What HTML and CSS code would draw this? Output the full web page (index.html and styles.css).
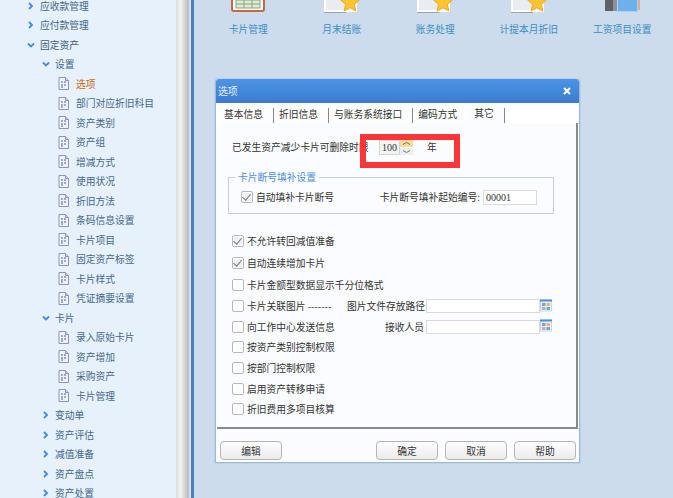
FILE: index.html
```html
<!DOCTYPE html>
<html lang="zh">
<head>
<meta charset="utf-8">
<title>选项</title>
<link rel="stylesheet" href="styles.css">
</head>
<body>
<div class="app">
  <nav class="side">
    <ul class="tree">
      <li class="row l1"><svg class="ar" viewBox="0 0 8 8"><path d="M2 1l3 3-3 3" /></svg>应收款管理</li>
      <li class="row l1"><svg class="ar" viewBox="0 0 8 8"><path d="M2 1l3 3-3 3" /></svg>应付款管理</li>
      <li class="row l1"><svg class="ar" viewBox="0 0 8 8"><path d="M1 2.5l3 3 3-3" /></svg><span class="dk">固定资产</span></li>
      <li class="row l2"><svg class="ar" viewBox="0 0 8 8"><path d="M1 2.5l3 3 3-3" /></svg>设置</li>
      <li class="row l3 cur-item"><svg class="doc" viewBox="0 0 11 13"><use href="#d"/></svg>选项</li>
      <li class="row l3"><svg class="doc" viewBox="0 0 11 13"><use href="#d"/></svg>部门对应折旧科目</li>
      <li class="row l3"><svg class="doc" viewBox="0 0 11 13"><use href="#d"/></svg>资产类别</li>
      <li class="row l3"><svg class="doc" viewBox="0 0 11 13"><use href="#d"/></svg>资产组</li>
      <li class="row l3"><svg class="doc" viewBox="0 0 11 13"><use href="#d"/></svg>增减方式</li>
      <li class="row l3"><svg class="doc" viewBox="0 0 11 13"><use href="#d"/></svg>使用状况</li>
      <li class="row l3"><svg class="doc" viewBox="0 0 11 13"><use href="#d"/></svg>折旧方法</li>
      <li class="row l3"><svg class="doc" viewBox="0 0 11 13"><use href="#d"/></svg>条码信息设置</li>
      <li class="row l3"><svg class="doc" viewBox="0 0 11 13"><use href="#d"/></svg>卡片项目</li>
      <li class="row l3"><svg class="doc" viewBox="0 0 11 13"><use href="#d"/></svg>固定资产标签</li>
      <li class="row l3"><svg class="doc" viewBox="0 0 11 13"><use href="#d"/></svg>卡片样式</li>
      <li class="row l3"><svg class="doc" viewBox="0 0 11 13"><use href="#d"/></svg>凭证摘要设置</li>
      <li class="row l2"><svg class="ar" viewBox="0 0 8 8"><path d="M1 2.5l3 3 3-3" /></svg>卡片</li>
      <li class="row l3"><svg class="doc" viewBox="0 0 11 13"><use href="#d"/></svg>录入原始卡片</li>
      <li class="row l3"><svg class="doc" viewBox="0 0 11 13"><use href="#d"/></svg>资产增加</li>
      <li class="row l3"><svg class="doc" viewBox="0 0 11 13"><use href="#d"/></svg>采购资产</li>
      <li class="row l3"><svg class="doc" viewBox="0 0 11 13"><use href="#d"/></svg>卡片管理</li>
      <li class="row l2"><svg class="ar" viewBox="0 0 8 8"><path d="M2 1l3 3-3 3" /></svg>变动单</li>
      <li class="row l2"><svg class="ar" viewBox="0 0 8 8"><path d="M2 1l3 3-3 3" /></svg>资产评估</li>
      <li class="row l2"><svg class="ar" viewBox="0 0 8 8"><path d="M2 1l3 3-3 3" /></svg>减值准备</li>
      <li class="row l2"><svg class="ar" viewBox="0 0 8 8"><path d="M2 1l3 3-3 3" /></svg>资产盘点</li>
      <li class="row l2"><svg class="ar" viewBox="0 0 8 8"><path d="M2 1l3 3-3 3" /></svg>资产处置</li>
    </ul>
  </nav>
  <div class="split"></div>
  <main class="main">
    <div class="tools">
      <div class="tool">
        <svg class="ti" viewBox="0 0 36 14"><rect x="2" y="-6" width="32" height="17" rx="2" fill="#fff" stroke="#c9683f" stroke-width="2"/><path d="M6 0h24v8H6z" fill="#dfe9d4" stroke="#8aa67c"/><path d="M6 4h24M14 0v8M22 0v8" stroke="#8aa67c"/></svg>
        <span>卡片管理</span>
      </div>
      <div class="tool">
        <svg class="ti" viewBox="0 0 36 14"><use href="#cal"/></svg>
        <span>月末结账</span>
      </div>
      <div class="tool">
        <svg class="ti" viewBox="0 0 36 14"><use href="#cal"/></svg>
        <span>账务处理</span>
      </div>
      <div class="tool">
        <svg class="ti" viewBox="0 0 36 14"><use href="#cal"/></svg>
        <span>计提本月折旧</span>
      </div>
      <div class="tool">
        <svg class="ti" viewBox="0 0 36 14"><rect x="1" y="-4" width="12" height="15" fill="#5e6268"/><rect x="9" y="-4" width="6" height="15" fill="#8f9297"/><rect x="33" y="-4" width="3" height="14" fill="#dcae92"/><rect x="13.5" y="-4" width="20" height="15.500" fill="#6fb0ea" stroke="#a9d2f5"/></svg>
        <span>工资项目设置</span>
      </div>
    </div>
    <section class="dlg">
      <header class="dh"><span>选项</span><svg class="x" viewBox="0 0 8 8"><path d="M1 1l6 6M7 1l-6 6"/></svg></header>
      <div class="tabs">
        <span class="tab">基本信息</span><span class="tab">折旧信息</span><span class="tab">与账务系统接口</span><span class="tab nosep">编码方式</span><span class="tab cur">其它</span>
      </div>
      <div class="panel">
        <div class="limit">
          <span class="ll">已发生资产减少卡片可删除时限</span>
          <span class="num">100</span>
          <span class="spin">
            <svg class="sb up" viewBox="0 0 13 7"><path d="M3 4.500l3.500-2 3.500 2"/></svg>
            <svg class="sb dn" viewBox="0 0 13 7"><path d="M3 2.500l3.500 2 3.500-2"/></svg>
          </span>
          <span class="yr">年</span>
          <div class="mark"></div>
        </div>
        <fieldset class="fs">
          <legend>卡片断号填补设置</legend>
          <div class="fr">
            <label class="ck chk">自动填补卡片断号</label>
            <span class="fstart">卡片断号填补起始编号:<span class="inp s">00001</span></span>
          </div>
        </fieldset>
        <div class="opts">
          <label class="ck chk tall">不允许转回减值准备</label>
          <label class="ck chk tall">自动连续增加卡片</label>
          <label class="ck tall">卡片金额型数据显示千分位格式</label>
          <div class="line">
            <label class="ck w1">卡片关联图片 -------</label>
            <span class="fl w2">图片文件存放路径</span>
            <span class="inp b"></span>
            <svg class="cal" viewBox="0 0 12 12"><use href="#grid"/></svg>
          </div>
          <div class="line">
            <label class="ck w1">向工作中心发送信息</label>
            <span class="fl w2">接收人员</span>
            <span class="inp b"></span>
            <svg class="cal" viewBox="0 0 12 12"><use href="#grid"/></svg>
          </div>
          <label class="ck">按资产类别控制权限</label>
          <label class="ck">按部门控制权限</label>
          <label class="ck">启用资产转移申请</label>
          <label class="ck">折旧费用多项目核算</label>
        </div>
      </div>
      <footer class="df">
        <button class="btn">编辑</button>
        <span class="sp"></span>
        <button class="btn">确定</button>
        <button class="btn">取消</button>
        <button class="btn">帮助</button>
      </footer>
    </section>
  </main>
</div>
<svg class="defs" width="0" height="0">
  <defs>
    <g id="d"><path d="M1 .5h6.500l3 3v9H1z" fill="#eef1fa" stroke="#8c93c4"/><path d="M7.500.5v3h3" fill="#c9cfe8" stroke="#8c93c4"/><path d="M3 5h2M6 5h2M3 8h2M6 8h2M3 10h2" stroke="#55618c"/></g>
    <g id="cal"><path d="M1 -4h31v15H1z" fill="#e9edf2" stroke="#fff" stroke-width="2"/><path d="M0 12.500h22" stroke="#9aa2ab"/><path d="M26-7l2.700 6.300 6.800.6-5.100 4.500 1.500 6.700-5.900-3.500-5.900 3.500 1.500-6.700-5.100-4.500 6.800-.6z" fill="#fbc434" stroke="#efa91f" stroke-width="1" stroke-linejoin="round"/></g>
    <g id="grid"><rect x=".5" y=".5" width="11" height="11" fill="#eaf1fa" stroke="#c6d6ea"/><rect x="0" y="0" width="12" height="2" fill="#4f8fd8"/><rect x="2" y="3.500" width="3.500" height="3" fill="#6aa8e0"/><rect x="6.500" y="3.500" width="3.500" height="3" fill="#f2b06a"/><rect x="2" y="7.500" width="3.500" height="3" fill="#e79ab8"/><rect x="6.500" y="7.500" width="3.500" height="3" fill="#5fb8a8"/></g>
  </defs>
</svg>
</body>
</html>
```
FILE: styles.css
```css
*{box-sizing:border-box}
html,body{margin:0;padding:0;height:100%;overflow:hidden}
body{font-family:"Noto Sans CJK SC","Liberation Sans",sans-serif;font-size:9.75px;color:#333}
.app{display:flex;width:673px;height:498px;overflow:hidden}
.side{width:176px;flex:none;background:#e6f1fb;overflow:hidden}
.tree{list-style:none;margin:-4px 0 0;padding:0}
.row{height:19.5px;display:flex;align-items:center;color:#44688c;white-space:nowrap}
.dk{color:#3b5a7a}
.l1{padding-left:27px}
.l2{padding-left:42px}
.l3{padding-left:58px}
.cur-item{color:#c8660f}
.ar{width:8px;height:8px;margin-right:5px;flex:none}
.ar path{fill:none;stroke:#3f8be6;stroke-width:1.8}
.doc{width:11px;height:13px;margin-right:7px;flex:none}
.split{width:18px;flex:none;background:linear-gradient(90deg,#dcdcdc 0,#f4f4f4 25%,#bcbcc0 68%,#dfe6ee 78%,#dfe6ee 84%,#4a7fc2 84%,#4a7fc2 100%)}
.main{flex:1;min-width:0;background:#cddcec;display:flex;flex-direction:column;padding-left:21px}
.tools{height:79px;display:grid;grid-template-columns:repeat(5,93.5px);flex:none;margin-left:-13.5px}
.tool{display:flex;flex-direction:column;align-items:center;color:#3a8fc4}
.ti{width:36px;height:14px;margin-bottom:8px;overflow:hidden}
.tool span{line-height:14px;white-space:nowrap}
.dlg{width:365px;height:384px;border:1px solid #9db9dc;border-top:none;border-radius:3px 3px 0 0;display:flex;flex-direction:column;background:#fbfcff;box-shadow:0 0 0 1px #bdd1e8;flex:none}
.dh{height:24px;flex:none;background:linear-gradient(#4c94e6,#3b7bd0);color:#e8f1fb;display:flex;align-items:center;justify-content:space-between;padding:0 8px 0 2px;border-radius:3px 3px 0 0}
.x{width:8px;height:8px}
.x path{stroke:#fff;stroke-width:2;fill:none}
.tabs{height:20px;flex:none;display:flex;background:#fff;padding:2px 0 0 3px;align-items:stretch;color:#333}
.tab{display:flex;align-items:center;padding:0 11px 0 5px;position:relative;white-space:nowrap;background:#fdfdfd}
.tab::after{content:"";position:absolute;right:0;top:3px;bottom:0;width:1px;background:#888}
.tab.nosep::after{content:none}
.tab.cur{padding:0 11px 2px 6px;background:#fafcff}
.panel{margin:0 1px;height:306px;background:#fbfcff;border:solid #8a8a8a;border-width:0 2px 2px 0;flex:none;padding-top:15px;display:flex;flex-direction:column}
.limit{display:flex;align-items:center;height:18px;padding-left:15px;position:relative}
.ll{width:147px;white-space:nowrap}
.num{width:21px;height:15px;border:1px solid #d4d4d4;background:#f3f3f3;display:flex;align-items:center;justify-content:center;font-family:"Liberation Serif",serif;font-size:10px}
.spin{display:flex;flex-direction:column;width:13px;height:15px;justify-content:space-between;flex:none}
.sb{display:block;width:13px;height:7px}
.sb path{fill:none;stroke:#777;stroke-width:1}
.up{background:#f8dc94}
.dn{background:#eceff3}
.yr{margin-left:14px}
.mark{position:absolute;left:143px;top:-4px;width:100px;height:34px;border:6px solid #fb3538;pointer-events:none}
.fs{margin:15px 0 0 11px;width:326px;height:43px;border:1px solid #bfd0e2;padding:0;min-width:0}
.fs legend{padding:0 3px;margin-left:6px;color:#4a8fd8;line-height:13px}
.fr{display:flex;align-items:center;justify-content:space-between;height:18px;margin-top:4px;padding:0 16px 0 12px}
.fstart{display:flex;align-items:center;white-space:nowrap}
.inp{display:block;background:#fff;border:1px solid #d6dbe2;height:15px}
.inp.s{width:54px;margin-left:3px;padding-left:2px;font-family:"Liberation Serif",serif;font-size:10px;line-height:13px}
.inp.b{width:114px;height:14px}
.opts{margin:16px 0 0 15px;display:flex;flex-direction:column}
.ck{display:flex;align-items:center;height:20.6px;white-space:nowrap;position:relative}
.ck.tall{height:22px}
.ck::before{content:"";width:10px;height:10px;border:1px solid #b8b8b8;border-radius:2px;background:#fff;margin-right:3px;flex:none}
.ck.chk::before{background:#eef0f3;box-shadow:inset 0 0 0 1px #fff}
.ck.chk::after{content:"";position:absolute;left:3px;top:50%;width:4px;height:7px;margin-top:-5px;border:solid #777;border-width:0 1.5px 1.5px 0;transform:rotate(40deg)}
.line{display:flex;align-items:center;height:20.6px}
.w1{width:115px}
.fl{white-space:nowrap}
.w2{width:79px;text-align:right;padding-right:2px}
.cal{width:12px;height:13px;flex:none;margin-top:-2px}
.df{display:flex;align-items:flex-start;padding:12px 0 0 4px;gap:7px}
.sp{width:80px}
.btn{width:62px;height:19px;padding:0;border:1px solid #b4b4b4;border-radius:4px;background:linear-gradient(#fdfdfd,#ececec);font:inherit;color:#333}
.defs{position:absolute}
```
